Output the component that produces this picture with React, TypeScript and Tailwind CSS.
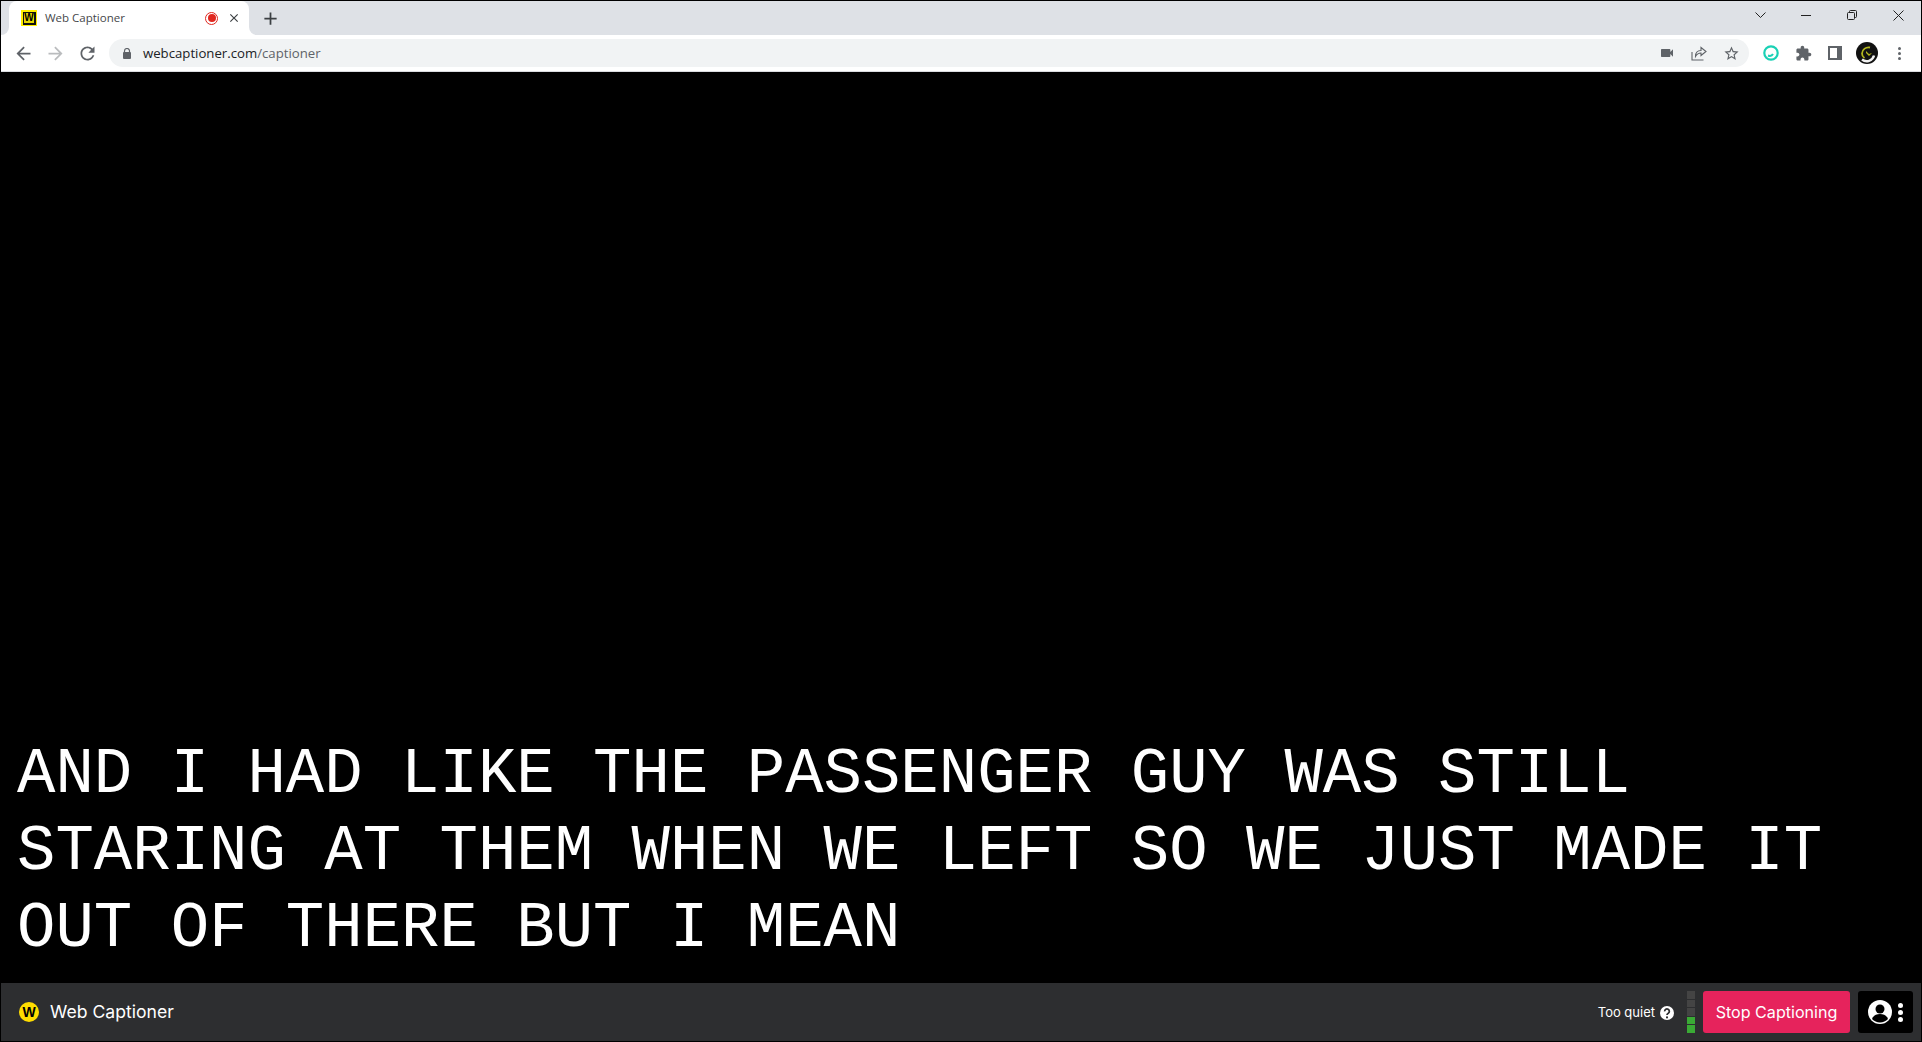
const materialPaths = {
  back: "M20 11H7.83l5.59-5.59L12 4l-8 8 8 8 1.41-1.41L7.83 13H20v-2z",
  reload: "M17.65 6.35C16.2 4.9 14.21 4 12 4c-4.42 0-7.99 3.58-7.99 8s3.57 8 7.99 8c3.73 0 6.84-2.55 7.73-6h-2.08c-.82 2.33-3.04 4-5.65 4-3.31 0-6-2.69-6-6s2.69-6 6-6c1.66 0 3.14.69 4.22 1.78L13 11h7V4l-2.35 2.35z",
  plus: "M19 13h-6v6h-2v-6H5v-2h6V5h2v6h6v2z",
  close: "M19 6.41 17.59 5 12 10.59 6.41 5 5 6.41 10.59 12 5 17.59 6.41 19 12 13.41 17.59 19 19 17.59 13.41 12z",
  star: "M22 9.24l-7.19-.62L12 2 9.19 8.63 2 9.24l5.46 4.73L5.82 21 12 17.27 18.18 21l-1.63-7.03L22 9.24zM12 15.4l-3.76 2.27 1-4.28-3.32-2.88 4.38-.38L12 6.1l1.71 4.04 4.38.38-3.32 2.88 1 4.28L12 15.4z",
  puzzle: "M20.5 11H19V7c0-1.1-.9-2-2-2h-4V3.5C13 2.12 11.88 1 10.5 1S8 2.12 8 3.5V5H4c-1.1 0-1.99.9-1.99 2v3.8H3.5c1.49 0 2.7 1.21 2.7 2.7s-1.21 2.7-2.7 2.7H2V20c0 1.1.9 2 2 2h3.8v-1.5c0-1.49 1.21-2.7 2.7-2.7 1.49 0 2.7 1.21 2.7 2.7V22H17c1.1 0 2-.9 2-2v-4h1.5c1.38 0 2.5-1.12 2.5-2.5S21.88 11 20.5 11z",
  video: "M17 10.5V7c0-.55-.45-1-1-1H4c-.55 0-1 .45-1 1v10c0 .55.45 1 1 1h12c.55 0 1-.45 1-1v-3.5l4 4v-11l-4 4z",
};

function Mat({ d, size, color }: { d: string; size: number; color: string }) {
  return (
    <svg width={size} height={size} viewBox="0 0 24 24" fill={color}>
      <path d={d} />
    </svg>
  );
}

function IconBox({ children }: { children: React.ReactNode }) {
  return <div className="w-8 h-7 flex items-center justify-center shrink-0">{children}</div>;
}

function WinButton({ children }: { children: React.ReactNode }) {
  return <div className="w-[46px] h-7 flex items-center justify-center shrink-0">{children}</div>;
}

function LogoSquare() {
  return (
    <div className="w-4 h-4 bg-[#ffee00] flex items-center justify-center shrink-0">
      <div className="w-[13px] h-[13px] bg-[#111] flex items-center justify-center">
        <div className="w-[10px] h-[10px] bg-[#e8d800] flex items-center justify-center text-black text-[10px] font-bold leading-none font-['Liberation_Sans',sans-serif]">
          W
        </div>
      </div>
    </div>
  );
}

function BrowserChrome() {
  return (
    <div className="shrink-0 font-['Open_Sans',sans-serif]">
      <div className="h-[34px] bg-[#dee1e6] flex items-start pl-2">
        <div className="relative w-[240px] h-[34px] bg-white rounded-t-lg flex items-center pl-3 pr-[8px]">
          <div className="absolute left-[-8px] bottom-0 w-2 h-2 bg-white">
            <div className="w-2 h-2 bg-[#dee1e6] rounded-br-lg" />
          </div>
          <div className="absolute right-[-8px] bottom-0 w-2 h-2 bg-white">
            <div className="w-2 h-2 bg-[#dee1e6] rounded-bl-lg" />
          </div>
          <LogoSquare />
          <span className="ml-[8px] text-[11.5px] text-[#45474a] flex-1">Web Captioner</span>
          <div className="w-[13px] h-[13px] rounded-full border border-[#e0281f] flex items-center justify-center mr-[9px]">
            <div className="w-[8px] h-[8px] rounded-full bg-[#e0281f]" />
          </div>
          <Mat d={materialPaths.close} size={14} color="#3c4043" />
        </div>
        <div className="h-[34px] flex items-center ml-[11px]">
          <Mat d={materialPaths.plus} size={21} color="#3c4043" />
        </div>
        <div className="flex-1" />
        <div className="flex">
          <WinButton>
            <svg width="11" height="6" viewBox="0 0 11 6" fill="none" stroke="#222">
              <path d="M.5.5l5 5 5-5" />
            </svg>
          </WinButton>
          <WinButton>
            <div className="w-[10px] h-[1px] bg-[#222]" />
          </WinButton>
          <WinButton>
            <svg width="10" height="10" viewBox="0 0 10 10" fill="none" stroke="#222">
              <rect x=".5" y="2.5" width="7" height="7" rx="1" />
              <path d="M2.5 2.5V1.5a1 1 0 0 1 1-1h5a1 1 0 0 1 1 1v5a1 1 0 0 1-1 1h-1" />
            </svg>
          </WinButton>
          <WinButton>
            <svg width="11" height="11" viewBox="0 0 11 11" fill="none" stroke="#222">
              <path d="M.5.5l10 10M10.5.5l-10 10" />
            </svg>
          </WinButton>
        </div>
      </div>
      <div className="h-[37px] bg-white flex items-center border-b border-[#dadce0] pl-[6px] pr-[6px]">
        <IconBox><Mat d={materialPaths.back} size={21} color="#5f6368" /></IconBox>
        <IconBox><div className="rotate-180"><Mat d={materialPaths.back} size={21} color="#babcbe" /></div></IconBox>
        <IconBox><Mat d={materialPaths.reload} size={21} color="#5f6368" /></IconBox>
        <div className="flex-1 h-[28px] rounded-full bg-[#f1f3f4] ml-[6px] mr-[6px] flex items-center pl-[14px] pr-[2px]">
          <svg width="8" height="11" viewBox="0 0 8 11" fill="#5f6368">
            <rect x="0" y="4" width="8" height="7" rx="1" />
            <path d="M1.5 4.5V3a2.5 2.5 0 0 1 5 0v1.5" fill="none" stroke="#5f6368" strokeWidth="1.2" />
          </svg>
          <span className="ml-[12px] text-[13.2px] text-[#202124] pt-[1px]">
            webcaptioner.com<span className="text-[#5f6368]">/captioner</span>
          </span>
          <div className="flex-1" />
          <IconBox><Mat d={materialPaths.video} size={16} color="#5f6368" /></IconBox>
          <IconBox>
            <svg width="16" height="16" viewBox="0 0 16 16" fill="none" stroke="#5f6368" strokeWidth="1.1">
              <path d="M1 7v8h11.5" />
              <path d="M4.5 11.5C4.5 7.5 7 5.5 10 5.5V2.5l5 4-5 4V8c-2 0-4 1-5.5 3.5z" />
            </svg>
          </IconBox>
          <IconBox><Mat d={materialPaths.star} size={17} color="#5f6368" /></IconBox>
        </div>
        <IconBox>
          <svg width="16" height="16" viewBox="0 0 16 16" fill="none" stroke="#1ad1b5">
            <circle cx="8" cy="8" r="6.7" strokeWidth="2.2" />
            <path d="M5 10.5c2 .8 4 .3 5-1.5" strokeWidth="2" />
          </svg>
        </IconBox>
        <IconBox><Mat d={materialPaths.puzzle} size={17} color="#5f6368" /></IconBox>
        <IconBox>
          <div className="w-[14px] h-[14px] border-2 border-[#5f6368] flex justify-end">
            <div className="w-[3px] bg-[#5f6368]" />
          </div>
        </IconBox>
        <IconBox>
          <svg width="22" height="22" viewBox="0 0 22 22" fill="none">
            <circle cx="11" cy="11" r="11" fill="#111" />
            <path d="M14 5.5a6.5 6.5 0 0 0-8 6c0 2 1 3.5 2.5 4.5" stroke="#b5b81f" strokeWidth="1.8" />
            <path d="M18 13.5A7.5 7.5 0 0 1 6 17.5" stroke="#f2f2f2" strokeWidth="2.4" />
            <path d="M10 9l3 3 3-1-3 3-3-3z" fill="#b5b81f" />
          </svg>
        </IconBox>
        <IconBox>
          <div className="flex flex-col gap-[2px]">
            <div className="w-[3px] h-[3px] rounded-full bg-[#5f6368]" />
            <div className="w-[3px] h-[3px] rounded-full bg-[#5f6368]" />
            <div className="w-[3px] h-[3px] rounded-full bg-[#5f6368]" />
          </div>
        </IconBox>
      </div>
    </div>
  );
}

function VolumeMeter() {
  return (
    <div className="flex flex-col gap-[1px] w-2 h-[42px]">
      <div className="flex-1 bg-[#444]" />
      <div className="flex-1 bg-[#444]" />
      <div className="flex-1 bg-[#444]" />
      <div className="flex-1 bg-[#3aaa35]" />
      <div className="flex-1 bg-[#3aaa35]" />
    </div>
  );
}

function BottomBar() {
  return (
    <div className="h-[58px] shrink-0 bg-[#2d2e30] flex items-center pl-[18px] pr-[8px] text-white font-['Inter',sans-serif]">
      <div className="w-5 h-5 rounded-full bg-[#ffdd00] flex items-center justify-center text-black text-[14px] font-bold leading-none font-['Liberation_Sans',sans-serif]">W</div>
      <span className="ml-[11px] text-[17.6px]">Web Captioner</span>
      <div className="flex-1" />
      <span className="text-[13px] pt-[1px]">Too quiet</span>
      <svg width="14" height="14" viewBox="0 0 24 24" className="ml-[5px] mt-[1px]">
        <circle cx="12" cy="12" r="12" fill="#fff" />
        <path d="M8 9.2a4 4 0 1 1 6.2 3.3c-1.3.9-2.2 1.4-2.2 3" fill="none" stroke="#2d2e30" strokeWidth="3" />
        <circle cx="12" cy="19.5" r="1.8" fill="#2d2e30" />
      </svg>
      <div className="ml-[13px]"><VolumeMeter /></div>
      <button className="ml-[8px] h-[42px] w-[147px] bg-[#e6235c] rounded-[3px] text-[16.1px] text-white">Stop Captioning</button>
      <div className="ml-[8px] h-[42px] w-[55px] bg-black rounded-[3px] flex items-center justify-center gap-[6px]">
        <svg width="24" height="24" viewBox="0 0 24 24">
          <circle cx="12" cy="12" r="12" fill="#fff" />
          <circle cx="12" cy="9" r="4.5" fill="#000" />
          <path d="M4 19c1.5-4 5-5 8-5s6.5 1 8 5a11 11 0 0 1-16 0z" fill="#000" />
        </svg>
        <div className="flex flex-col gap-[2px]">
          <div className="w-[5px] h-[5px] rounded-full bg-white" />
          <div className="w-[5px] h-[5px] rounded-full bg-white" />
          <div className="w-[5px] h-[5px] rounded-full bg-white" />
        </div>
      </div>
    </div>
  );
}

export default function App() {
  return (
    <div className="w-[1922px] h-[1042px] bg-black border border-black flex flex-col overflow-hidden">
      <BrowserChrome />
      <div className="flex-1 flex flex-col justify-end px-4 pb-[15.6px] min-h-0">
        <p className="text-[64px] leading-[76.8px] text-white font-['Liberation_Mono',monospace] whitespace-pre-wrap">
          {"AND I HAD LIKE THE PASSENGER GUY WAS STILL\nSTARING AT THEM WHEN WE LEFT SO WE JUST MADE IT\nOUT OF THERE BUT I MEAN"}
        </p>
      </div>
      <BottomBar />
    </div>
  );
}
